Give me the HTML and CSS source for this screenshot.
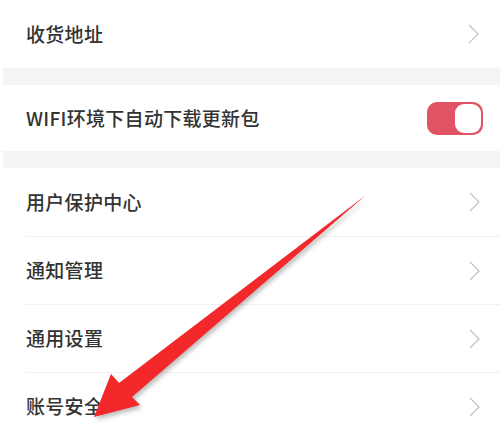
FILE: index.html
```html
<!DOCTYPE html>
<html lang="zh-CN">

<head>
    <meta charset="UTF-8">
    <meta name="viewport" content="width=device-width, initial-scale=1.0">
    <title>设置</title>
    <link rel="stylesheet" href="styles.css">
</head>

<body>
    <div class="page">
        <div class="group">
            <div class="row first">
                <span class="label">收货地址</span>
                <svg class="chevron" viewBox="0 0 12 20"><polyline points="1,1 10,10 1,19" /></svg>
            </div>
        </div>
        <div class="gap"></div>
        <div class="group">
            <div class="row wifi">
                <span class="label">WIFI环境下自动下载更新包</span>
                <div class="toggle"><div class="knob"></div></div>
            </div>
        </div>
        <div class="gap"></div>
        <div class="group">
            <div class="row">
                <span class="label">用户保护中心</span>
                <svg class="chevron" viewBox="0 0 12 20"><polyline points="1,1 10,10 1,19" /></svg>
            </div>
            <div class="row">
                <span class="label">通知管理</span>
                <svg class="chevron" viewBox="0 0 12 20"><polyline points="1,1 10,10 1,19" /></svg>
            </div>
            <div class="row">
                <span class="label">通用设置</span>
                <svg class="chevron" viewBox="0 0 12 20"><polyline points="1,1 10,10 1,19" /></svg>
            </div>
            <div class="row">
                <span class="label">账号安全</span>
                <svg class="chevron" viewBox="0 0 12 20"><polyline points="1,1 10,10 1,19" /></svg>
            </div>
        </div>

        <!-- red arrow drawn over the list -->
        <svg class="arrow" viewBox="0 0 500 429">
            <polygon points="366,195 132,397 140,405 94,417 111,374 119,383" />
        </svg>
    </div>
</body>

</html>
```

FILE: styles.css
```css
/* Reset default margin and padding */
* {
    margin: 0;
    padding: 0;
    box-sizing: border-box;
}

body {
    font-family: "Noto Sans CJK SC", "Noto Sans", sans-serif;
    background-color: #fff;
    color: #333;
    width: 500px;
    height: 429px;
    overflow: hidden;
}

.page {
    position: relative;
    padding-left: 3px;
}

/* Grey band between groups */
.gap {
    height: 17px;
    background-color: #f4f4f4;
}

.group {
    background-color: #fff;
}

/* List rows */
.row {
    display: flex;
    align-items: center;
    justify-content: space-between;
    height: 68px;
    margin-left: 23px;
    padding-right: 19px;
    border-top: 1px solid #f1f1f1;
}

.group .row:first-child {
    border-top: none;
}

.row.first {
    border-top: 2px solid #f3f3f3;
    margin-right: 20px;
    padding-right: 0;
}

.row.wifi {
    height: 66px;
}

.label {
    font-size: 19px;
    font-weight: 500;
    line-height: 1;
    letter-spacing: 0.3px;
    margin-top: -2px;
}

.chevron {
    width: 12px;
    height: 20px;
    fill: none;
    stroke: #c6c6c6;
    stroke-width: 1.4;
}

/* Switch */
.toggle {
    width: 56px;
    height: 33px;
    border-radius: 10px;
    background-color: #e25365;
    display: flex;
    align-items: center;
    justify-content: flex-end;
    padding-right: 2px;
    margin-right: -2px;
}

.knob {
    width: 26px;
    height: 29px;
    border-radius: 9px;
    background-color: #fff;
}

/* Annotation arrow */
.arrow {
    position: absolute;
    left: 0;
    top: 0;
    width: 500px;
    height: 429px;
    fill: #f2282a;
    filter: drop-shadow(2px 3px 2px rgba(0, 0, 0, 0.25));
}
```
